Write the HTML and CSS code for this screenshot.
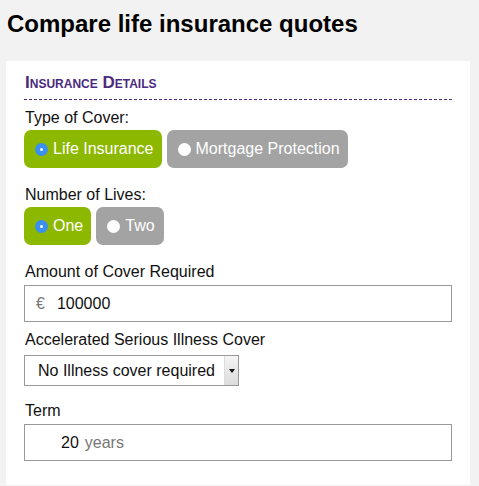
FILE: index.html
```html
<!DOCTYPE html>
<html>
<head>
<meta charset="utf-8">
<link rel="stylesheet" href="styles.css">
</head>
<body>
<h1 class="title">Compare life insurance quotes</h1>
<div class="card">
  <div class="section-title">Insurance Details</div>
  <div class="field">
    <div class="label">Type of Cover:</div>
    <div class="toggles">
      <span class="toggle on"><span class="radio"></span>Life Insurance</span>
      <span class="toggle off"><span class="radio"></span>Mortgage Protection</span>
    </div>
  </div>
  <div class="field">
    <div class="label">Number of Lives:</div>
    <div class="toggles">
      <span class="toggle on"><span class="radio"></span>One</span>
      <span class="toggle off two"><span class="radio"></span>Two</span>
    </div>
  </div>
  <div class="field">
    <div class="label">Amount of Cover Required</div>
    <div class="input"><span class="prefix">€</span><span class="value">100000</span></div>
  </div>
  <div class="field">
    <div class="label">Accelerated Serious Illness Cover</div>
    <div class="select"><span class="select-text">No Illness cover required</span><span class="select-arrow"></span></div>
  </div>
  <div class="field term-field">
    <div class="label">Term</div>
    <div class="input term"><span class="value">20</span><span class="suffix">years</span></div>
  </div>
</div>
</body>
</html>
```
FILE: styles.css
```css
html, body {
  margin: 0;
  padding: 0;
  background: #f2f2f2;
  font-family: "Liberation Sans", Arial, sans-serif;
  color: #111;
  height: 486px;
  overflow: hidden;
}
.title {
  margin: 0;
  padding: 10px 0 0 7px;
  font-size: 24px;
  line-height: 27px;
  font-weight: bold;
  color: #000;
}
.card {
  margin: 24px 0 0 6px;
  width: 428px;
  padding: 10px 18px 24px 18px;
  background: #fff;
}
.section-title {
  font-variant: small-caps;
  font-weight: bold;
  font-size: 17px;
  color: #4a2a7e;
  padding: 3px 1px 8px;
  border-bottom: 1px dashed #4a2a7e;
  line-height: 17px;
}
.field {
  margin-top: 8px;
}
.label {
  font-size: 16px;
  line-height: 19px;
  padding-left: 1px;
}
.toggles {
  display: flex;
  gap: 5px;
  margin-top: 3px;
  margin-bottom: 17px;
}
.toggle {
  display: inline-flex;
  align-items: center;
  height: 38px;
  padding: 0 8px 0 11px;
  border-radius: 7px;
  color: #fff;
  font-size: 16px;
}
.toggle.on { background: #8db800; }
.toggle.off { background: #a3a3a3; }
.toggle.two { padding-left: 11px; padding-right: 9px; }
.radio {
  width: 13px;
  height: 13px;
  border-radius: 50%;
  margin-right: 5px;
  box-sizing: border-box;
  background: #fff;
}
.on .radio {
  background: #3a8ff0;
  position: relative;
}
.on .radio::after {
  content: "";
  position: absolute;
  left: 5px;
  top: 5px;
  width: 3px;
  height: 3px;
  border-radius: 50%;
  background: #fff;
}
.input {
  margin-top: 4px;
  height: 35px;
  border: 1px solid #999;
  display: flex;
  align-items: center;
  padding-left: 11px;
  font-size: 16px;
  background: #fff;
}
.prefix { color: #777; margin-right: 12px; }
.value { color: #111; }
.term { padding-left: 36px; }
.suffix { color: #777; margin-left: 6px; }
.term-field { margin-top: 15px; }
.select {
  margin-top: 6px;
  width: 213px;
  height: 29px;
  border: 1px solid #999;
  display: flex;
  align-items: center;
  font-size: 16px;
  position: relative;
}
.select-text {
  padding-left: 13px;
  flex: 1;
}
.select-arrow {
  width: 13px;
  height: 29px;
  background: linear-gradient(#f4f4f4, #dcdcdc);
  border-left: 1px solid #ddd;
  position: relative;
}
.select-arrow::after {
  content: "";
  position: absolute;
  left: 4px;
  top: 13px;
  border-left: 3px solid transparent;
  border-right: 3px solid transparent;
  border-top: 4px solid #111;
}
```
